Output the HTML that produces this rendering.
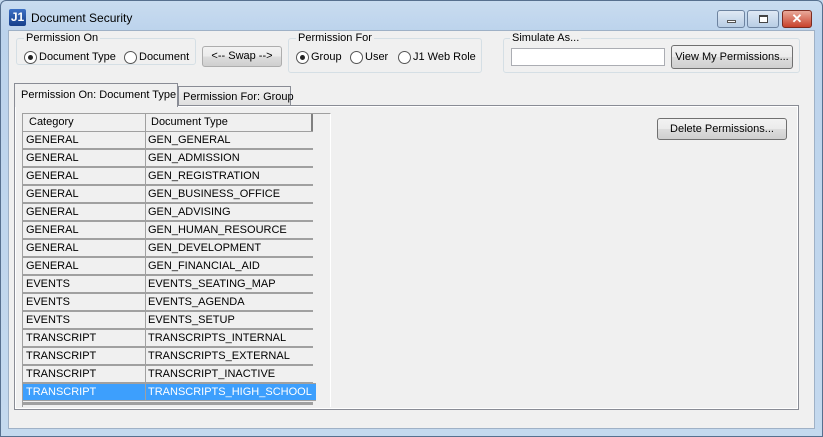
<!DOCTYPE html>
<html><head><style>
*{margin:0;padding:0;box-sizing:border-box}
body{width:823px;height:437px;background:#c4d9ee;font-family:"Liberation Sans",sans-serif;font-size:11px;color:#000;position:relative;overflow:hidden}
.a{position:absolute;white-space:nowrap}
.win{left:0;top:0;width:823px;height:437px;border:1px solid #57708f;border-radius:6px 6px 0 0;background:linear-gradient(#c9dcf0,#bcd3ec 30px,#c4d9ee)}
.client{left:8px;top:30px;width:807px;height:399px;background:#f0f0f0;border:1px solid #9fb1c6}
.gb{border:1px solid #d5dfe5;border-radius:3px}
.lg{background:#f0f0f0;padding:0 2px}
.btn{border:1px solid #707070;border-radius:3px;background:linear-gradient(#f2f2f2,#ebebeb 50%,#dddddd 51%,#cfcfcf);text-align:center;line-height:19px}
.rad{width:13px;height:13px;border:1px solid #555;border-radius:50%;background:#fff}
.dot:after{content:"";position:absolute;left:3px;top:3px;width:5px;height:5px;border-radius:50%;background:#222}
.row{left:0;width:290px;height:18px;line-height:16px;border-top:1px solid #a0a0a0;border-bottom:1px solid #a0a0a0}
.c1{left:1px;width:121px}
.c2{left:122px;width:166px;border-left:1px solid #a0a0a0}
.cell{position:absolute;top:0;height:16px;padding-left:2px;white-space:nowrap}
</style></head><body>
<div class="a win"></div>
<div class="a" style="left:9px;top:9px;width:17px;height:17px;background:linear-gradient(#3b6fc4,#173f8a);color:#fff;font-weight:bold;font-size:12px;line-height:17px;text-align:center;border-radius:2px">J1</div>
<div class="a" style="left:31px;top:11px;font-size:12px">Document Security</div>
<div class="a" style="left:717px;top:10px;width:28px;height:18px;border:1px solid #6d83a0;border-radius:3px;background:linear-gradient(#dfe9f5,#b8cde5)"><div class="a" style="left:9px;top:9px;width:9px;height:3px;background:#fff;border:1px solid #555"></div></div>
<div class="a" style="left:747px;top:10px;width:32px;height:18px;border:1px solid #6d83a0;border-radius:3px;background:linear-gradient(#dfe9f5,#b8cde5)"><div class="a" style="left:11px;top:4px;width:9px;height:8px;border:1px solid #444;border-top-width:2px;background:#fff"></div></div>
<div class="a" style="left:782px;top:10px;width:30px;height:18px;border:1px solid #7b2b20;border-radius:3px;background:linear-gradient(#e9a99a,#c8422c);color:#fff;font-weight:bold;font-size:13px;line-height:16px;text-align:center">✕</div>
<div class="a client"></div>

<div class="a gb" style="left:16px;top:38px;width:180px;height:27px"></div>
<div class="a lg" style="left:24px;top:32px">Permission On</div>
<div class="a rad dot" style="left:24px;top:51px"></div>
<div class="a" style="left:39px;top:51px">Document Type</div>
<div class="a rad" style="left:124px;top:51px"></div>
<div class="a" style="left:139px;top:51px">Document</div>
<div class="a btn" style="left:202px;top:46px;width:80px;height:21px;border-color:#adadad">&lt;-- Swap --&gt;</div>
<div class="a gb" style="left:288px;top:38px;width:194px;height:35px"></div>
<div class="a lg" style="left:296px;top:32px">Permission For</div>
<div class="a rad dot" style="left:296px;top:51px"></div>
<div class="a" style="left:311px;top:51px">Group</div>
<div class="a rad" style="left:350px;top:51px"></div>
<div class="a" style="left:365px;top:51px">User</div>
<div class="a rad" style="left:398px;top:51px"></div>
<div class="a" style="left:413px;top:51px">J1 Web Role</div>
<div class="a gb" style="left:503px;top:38px;width:297px;height:35px"></div>
<div class="a lg" style="left:510px;top:32px">Simulate As...</div>
<div class="a" style="left:511px;top:48px;width:154px;height:18px;border:1px solid #abadb3;background:#fff"></div>
<div class="a btn" style="left:671px;top:45px;width:122px;height:24px;line-height:22px">View My Permissions...</div>

<div class="a" style="left:14px;top:105px;width:785px;height:305px;border:1px solid #898c95;background:#fff"><div class="a" style="left:0;top:0;width:783px;height:303px;border:1px solid #fff;background:#f0f0f0"></div></div>
<div class="a" style="left:14px;top:83px;width:164px;height:24px;border:1px solid #898c95;border-bottom:none;background:#f0f0f0;padding:5px 0 0 6px">Permission On: Document Type</div>
<div class="a" style="left:178px;top:86px;width:113px;height:20px;border:1px solid #898c95;background:linear-gradient(#f2f2f2,#e0e0e0);padding:4px 0 0 4px">Permission For: Group</div>
<div class="a btn" style="left:657px;top:118px;width:130px;height:22px;line-height:20px">Delete Permissions...</div>

<div class="a" style="left:22px;top:113px;width:309px;height:294px;border-top:1px solid #a0a0a0;border-left:1px solid #a0a0a0;border-right:1px solid #fff">
 <div class="a" style="left:0;top:0;width:290px;height:18px;background:#f0f0f0;border-right:2px solid #808080;border-bottom:1px solid #a0a0a0">
  <div class="cell" style="left:4px;top:2px">Category</div><div class="a" style="left:122px;top:0;height:17px;border-left:1px solid #a0a0a0"></div><div class="cell" style="left:126px;top:2px">Document Type</div>
 </div>
 <div class="a" style="left:0;top:17px">
 <div class="a row" style="top:0"><div class="cell c1">GENERAL</div><div class="cell c2">GEN_GENERAL</div></div>
 <div class="a row" style="top:18px"><div class="cell c1">GENERAL</div><div class="cell c2">GEN_ADMISSION</div></div>
 <div class="a row" style="top:36px"><div class="cell c1">GENERAL</div><div class="cell c2">GEN_REGISTRATION</div></div>
 <div class="a row" style="top:54px"><div class="cell c1">GENERAL</div><div class="cell c2">GEN_BUSINESS_OFFICE</div></div>
 <div class="a row" style="top:72px"><div class="cell c1">GENERAL</div><div class="cell c2">GEN_ADVISING</div></div>
 <div class="a row" style="top:90px"><div class="cell c1">GENERAL</div><div class="cell c2">GEN_HUMAN_RESOURCE</div></div>
 <div class="a row" style="top:108px"><div class="cell c1">GENERAL</div><div class="cell c2">GEN_DEVELOPMENT</div></div>
 <div class="a row" style="top:126px"><div class="cell c1">GENERAL</div><div class="cell c2">GEN_FINANCIAL_AID</div></div>
 <div class="a row" style="top:144px"><div class="cell c1">EVENTS</div><div class="cell c2">EVENTS_SEATING_MAP</div></div>
 <div class="a row" style="top:162px"><div class="cell c1">EVENTS</div><div class="cell c2">EVENTS_AGENDA</div></div>
 <div class="a row" style="top:180px"><div class="cell c1">EVENTS</div><div class="cell c2">EVENTS_SETUP</div></div>
 <div class="a row" style="top:198px"><div class="cell c1">TRANSCRIPT</div><div class="cell c2">TRANSCRIPTS_INTERNAL</div></div>
 <div class="a row" style="top:216px"><div class="cell c1">TRANSCRIPT</div><div class="cell c2">TRANSCRIPTS_EXTERNAL</div></div>
 <div class="a row" style="top:234px"><div class="cell c1">TRANSCRIPT</div><div class="cell c2">TRANSCRIPT_INACTIVE</div></div>
 <div class="a row" style="top:252px;width:293px;background:#3d9ffd;color:#fff"><div class="cell c1">TRANSCRIPT</div><div class="cell c2">TRANSCRIPTS_HIGH_SCHOOL</div></div>
 <div class="a" style="top:271px;left:0;width:290px;height:3px;background:#a0a0a0"></div>
 </div>
</div>
</body></html>
